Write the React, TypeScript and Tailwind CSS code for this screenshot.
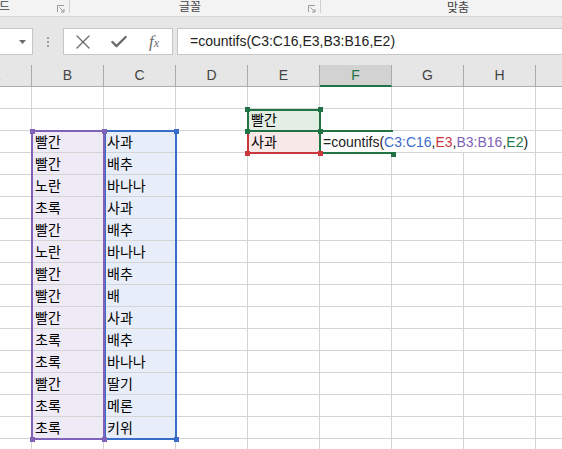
import { X, Check } from 'lucide-react';

const COLS = ['A', 'B', 'C', 'D', 'E', 'F', 'G', 'H', 'I'];
const colorB = ['빨간', '빨간', '노란', '초록', '빨간', '노란', '빨간', '빨간', '빨간', '초록', '초록', '빨간', '초록', '초록'];
const fruitC = ['사과', '배추', '바나나', '사과', '배추', '바나나', '배추', '배', '사과', '배추', '바나나', '딸기', '메론', '키위'];

const font = { fontFamily: '"Liberation Sans", "Noto Sans CJK KR", sans-serif' };

function Launcher() {
  return (
    <svg width="8" height="8" viewBox="0 0 8 8" className="shrink-0">
      <path d="M0.5 7V0.5H7" fill="none" stroke="#9a9a9a" strokeWidth="1" />
      <path d="M2.5 2.5L7 7M7 4v3H4" fill="none" stroke="#9a9a9a" strokeWidth="1" />
    </svg>
  );
}

function Formula() {
  return (
    <span className="whitespace-nowrap text-[#222]">
      =countifs(<span className="text-[#3a6cc9]">C3:C16</span>,<span className="text-[#c9383d]">E3</span>,
      <span className="text-[#8062b8]">B3:B16</span>,<span className="text-[#1e7b45]">E2</span>)
    </span>
  );
}

function Handle({ x, y, c }: { x: number; y: number; c: string }) {
  return <div className={`absolute h-[5px] w-[5px] ${c}`} style={{ left: x, top: y - 87 }} />;
}

export default function App() {
  const rows = Array.from({ length: 17 }, (_, i) => i + 1);

  const cellFor = (r: number, c: string) => {
    let bg = 'bg-white';
    let text: React.ReactNode = null;
    if (c === 'B' && r >= 3 && r <= 16) {
      bg = 'bg-[#efebf6]';
      text = colorB[r - 3];
    }
    if (c === 'C' && r >= 3 && r <= 16) {
      bg = 'bg-[#e8eef9]';
      text = fruitC[r - 3];
    }
    if (c === 'E' && r === 2) {
      bg = 'bg-[#e3efe5]';
      text = '빨간';
    }
    if (c === 'E' && r === 3) {
      bg = 'bg-[#f8e8e8]';
      text = '사과';
    }
    return (
      <div
        key={c}
        className={`flex h-[22px] w-[72px] shrink-0 items-center border-r border-b border-[#d4d4d4] pl-[3px] pt-px text-[14px] text-black ${bg}`}
      >
        {text}
      </div>
    );
  };

  return (
    <div className="flex h-[449px] w-[562px] flex-col overflow-hidden bg-white" style={font}>
      {/* ribbon group labels */}
      <div className="flex h-[17px] shrink-0 items-start overflow-hidden border-b border-[#d6d6d6] bg-[#f3f3f3] text-[12px] leading-[16px] text-[#444]">
        <div className="flex h-[14px] w-[69px] shrink-0 items-center">
          <span className="-ml-px">드</span>
          <div className="flex-1" />
          <div className="mr-[4px] mt-[4px]">
            <Launcher />
          </div>
        </div>
        <div className="h-[13px] w-px shrink-0 bg-[#d0d0d0]" />
        <div className="flex h-[14px] w-[250px] shrink-0 items-center">
          <span className="flex-1 pl-[2px] text-center">글꼴</span>
          <div className="mr-[4px] mt-[4px]">
            <Launcher />
          </div>
        </div>
        <div className="h-[13px] w-px shrink-0 bg-[#d0d0d0]" />
        <div className="h-[14px] flex-1 whitespace-nowrap pl-[126px]">맞춤</div>
      </div>

      {/* formula bar */}
      <div className="flex h-[48px] shrink-0 items-start bg-[#e6e6e6] pt-[11px]">
        <div className="-ml-px flex h-[27px] w-[34px] shrink-0 items-center justify-end border border-[#c6c6c6] bg-white pr-[6px]">
          <svg width="7" height="4" viewBox="0 0 7 4">
            <path d="M0 0h7L3.5 4z" fill="#6a6a6a" />
          </svg>
        </div>
        <div className="flex h-[27px] w-[30px] shrink-0 items-center justify-center">
          <svg width="2" height="10" viewBox="0 0 2 10">
            <rect x="0" y="0" width="2" height="2" fill="#a0a0a0" />
            <rect x="0" y="4" width="2" height="2" fill="#a0a0a0" />
            <rect x="0" y="8" width="2" height="2" fill="#a0a0a0" />
          </svg>
        </div>
        <div className="flex h-[27px] w-[110px] shrink-0 items-center border border-[#c6c6c6] bg-white text-[#6b6b6b]">
          <div className="flex w-[38px] justify-center">
            <X size={24} strokeWidth={1.3} />
          </div>
          <div className="flex w-[34px] justify-center">
            <Check size={20} strokeWidth={2.8} />
          </div>
          <div className="flex w-[36px] items-baseline justify-center" style={{ fontFamily: '"Liberation Serif", serif' }}>
            <span className="text-[17px] italic">f</span>
            <span className="text-[12px] italic">x</span>
          </div>
        </div>
        <div className="ml-[4px] flex h-[27px] flex-1 items-center border border-r-0 border-[#c6c6c6] bg-white pl-[12px] text-[14px] text-[#222]">
          =countifs(C3:C16,E3,B3:B16,E2)
        </div>
      </div>

      {/* column headers */}
      <div className="flex h-[22px] shrink-0 -ml-[40px]">
        {COLS.map((c) =>
          c === 'F' ? (
            <div
              key={c}
              className="flex h-[22px] w-[72px] shrink-0 items-center justify-center border-r border-b-2 border-r-[#ababab] border-b-[#217346] bg-[#d2d2d2] text-[14px] text-[#217346]"
            >
              {c}
            </div>
          ) : (
            <div
              key={c}
              className="flex h-[22px] w-[72px] shrink-0 items-center justify-center border-r border-b border-[#ababab] bg-[#e6e6e6] text-[14px] text-[#444]"
            >
              {c === 'I' ? '' : c}
            </div>
          )
        )}
      </div>

      {/* sheet body */}
      <div className="relative flex-1 overflow-hidden">
        <div className="-ml-[40px] flex flex-col">
          {rows.map((r) => (
            <div key={r} className="flex h-[22px] shrink-0">
              {r === 3
                ? [
                    ...['A', 'B', 'C', 'D', 'E'].map((c) => cellFor(r, c)),
                    <div
                      key="F"
                      className="flex h-[22px] w-[216px] shrink-0 items-center border-r border-b border-[#d4d4d4] bg-white pl-[3px] pt-px text-[14px]"
                    >
                      <Formula />
                    </div>,
                    cellFor(r, 'I'),
                  ]
                : COLS.map((c) => cellFor(r, c))}
            </div>
          ))}
        </div>

        {/* range highlights */}
        <div className="absolute left-[104px] top-[43px] h-[310px] w-[73px] border-2 border-[#3a6cc9]" />
        <div className="absolute left-[31px] top-[43px] h-[310px] w-[74px] border-2 border-[#8062b8]" />
        <div className="absolute left-[247px] top-[43px] h-[24px] w-[74px] border-2 border-[#c9383d]" />
        <div className="absolute left-[319px] top-[43px] h-[24px] w-[74px] border-t-2 border-l-2 border-b-2 border-[#217346]" />
        <div className="absolute left-[247px] top-[22px] h-[23px] w-[74px] border-2 border-[#217346]" />

        <Handle x={30} y={129} c="bg-[#8062b8]" />
        <Handle x={102} y={129} c="bg-[#8062b8]" />
        <Handle x={30} y={437} c="bg-[#8062b8]" />
        <Handle x={102} y={437} c="bg-[#8062b8]" />
        <Handle x={174} y={129} c="bg-[#3a6cc9]" />
        <Handle x={174} y={437} c="bg-[#3a6cc9]" />
        <Handle x={245} y={151} c="bg-[#c9383d]" />
        <Handle x={318} y={151} c="bg-[#c9383d]" />
        <Handle x={391} y={152} c="bg-[#217346]" />
        <Handle x={245} y={107} c="bg-[#217346]" />
        <Handle x={318} y={107} c="bg-[#217346]" />
        <Handle x={245} y={129} c="bg-[#217346]" />
        <Handle x={318} y={129} c="bg-[#217346]" />
      </div>
    </div>
  );
}
